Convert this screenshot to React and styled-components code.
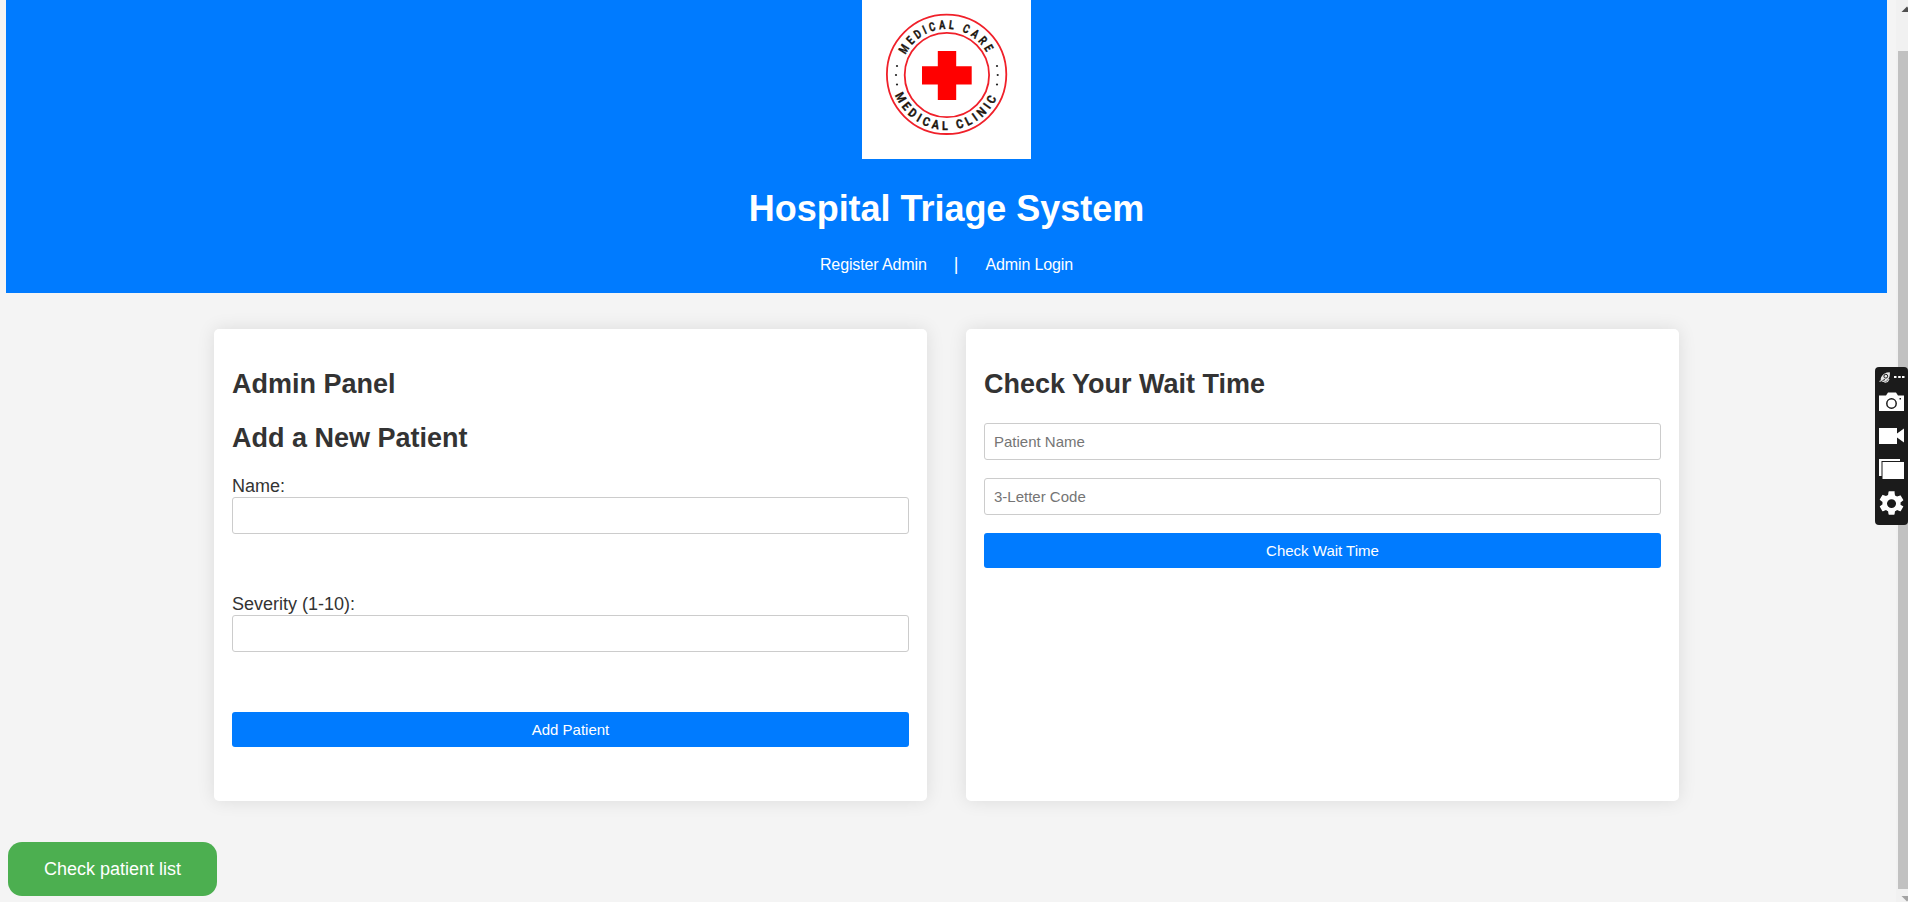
import React from "react";
import styled, { createGlobalStyle } from "styled-components";

const GlobalStyle = createGlobalStyle`
  *, *::before, *::after { box-sizing: border-box; }
  body {
    margin: 0;
    background: #f4f4f4;
    color: #333;
    font: 18px/21px "Liberation Sans", Arial, sans-serif;
    overflow: hidden;
  }
`;

const Shell = styled.div`
  display: flex;
  height: 902px;
  overflow: hidden;
`;

const Page = styled.div`
  flex: 1;
  min-width: 0;
  display: flex;
  flex-direction: column;
  align-items: flex-start;
  padding: 0 9px 0 6px;
`;

const Header = styled.header`
  align-self: stretch;
  height: 293px;
  display: flex;
  flex-direction: column;
  align-items: center;
  background: #007bff;
  color: #fff;
`;

const LogoFrame = styled.div`
  width: 169px;
  height: 159px;
  background: #fff;
  svg { display: block; }
`;

const Title = styled.h1`
  margin: 29px 0 0;
  font-size: 36px;
  line-height: 41px;
  letter-spacing: -0.03px;
`;

const Nav = styled.nav`
  display: flex;
  align-items: baseline;
  gap: 27px;
  margin-top: 25px;
  font-size: 18px;
  line-height: 20px;
`;

const NavLink = styled.a`
  color: #fff;
  font-size: 16px;
  letter-spacing: -0.12px;
  text-decoration: none;
`;

const Panels = styled.main`
  align-self: center;
  display: grid;
  grid-template-columns: 713px 713px;
  gap: 39px;
  margin-top: 36px;
`;

const Panel = styled.section`
  height: 472px;
  padding: 40px 18px 18px;
  border-radius: 5px;
  background: #fff;
  box-shadow: 0 0 18px rgba(0, 0, 0, 0.1);
`;

const Heading = styled.h2`
  margin: 0 0 ${(p) => p.$gap || 23}px;
  font-size: 27px;
  line-height: 31px;
`;

const Label = styled.label`
  display: block;
`;

const Input = styled.input`
  display: block;
  width: 100%;
  height: 37px;
  margin: 0 0 ${(p) => p.$gap}px;
  padding: 0 9px;
  border: 1px solid #ccc;
  border-radius: 3px;
  background: #fff;
  font: 15px "Liberation Sans", Arial, sans-serif;
  &::placeholder { color: #757575; }
`;

const Button = styled.button`
  display: block;
  width: 100%;
  height: 35px;
  padding: 0;
  border: 0;
  border-radius: 3px;
  background: #007bff;
  color: #fff;
  font: 15px "Liberation Sans", Arial, sans-serif;
`;

const ListButton = styled.button`
  width: 209px;
  height: 54px;
  margin: 41px 0 0 2px;
  padding: 0;
  border: 0;
  border-radius: 14px;
  background: #4caf50;
  color: #fff;
  font: 18px "Liberation Sans", Arial, sans-serif;
`;

const Scrollbar = styled.div`
  width: 12px;
  display: flex;
  flex-direction: column;
  background: #f1f1f1;
`;

const ScrollThumb = styled.div`
  flex: 1;
  margin-left: 2px;
  background: #c1c1c1;
`;

const ScrollArrow = styled.svg`
  display: block;
  width: 12px;
  height: ${(p) => p.$height}px;
`;

const CaptureBar = styled.aside`
  position: fixed;
  top: 367px;
  right: 0;
  width: 33px;
  height: 158px;
  border-radius: 4px;
  background: #1b1b1b;
  overflow: hidden;
  svg { display: block; }
`;

function Logo() {
  return (
    <svg width="169" height="159" viewBox="0 0 169 159">
      <defs>
        <path id="arcTop" d="M43.7 54.8 A45.3 45.3 0 0 1 125.5 54.8" />
        <path id="arcBottom" d="M33.1 95.1 A55.5 55.5 0 0 0 136.1 95.1" />
      </defs>
      <g fill="none" stroke="#f0202a" strokeWidth="1.8">
        <circle cx="84.6" cy="74.3" r="59.7" />
        <circle cx="84.9" cy="75" r="42.2" />
      </g>
      <path fill="#f00" d="M75.8 51h18.4v15.2h15.5v18.2H94.2V100H75.8V84.4H60V66.2h15.8z" />
      <g
        fill="#20160f"
        stroke="#20160f"
        strokeWidth="0.35"
        fontFamily='"Liberation Sans Narrow", Roboto, sans-serif'
        fontWeight="700"
        fontSize="12.2"
        letterSpacing="4"
      >
        <text>
          <textPath href="#arcTop" textLength="102" lengthAdjust="spacingAndGlyphs">MEDICAL CARE</textPath>
        </text>
        <text>
          <textPath href="#arcBottom" textLength="132" lengthAdjust="spacingAndGlyphs">MEDICAL CLINIC</textPath>
        </text>
      </g>
      <g fill="#222">
        {[66, 75, 84.5].map((y, i) => (
          <React.Fragment key={y}>
            <circle cx={i === 1 ? 34 : 35} cy={y} r="1.1" />
            <circle cx={i === 1 ? 135.7 : 135} cy={y} r="1.1" />
          </React.Fragment>
        ))}
      </g>
    </svg>
  );
}

function CaptureIcons() {
  return (
    <svg width="33" height="158" viewBox="0 0 33 158" fill="#fff">
      <path fill="#e6e6e6" d="M14.800 5.300c.5 4-1 7.500-4.300 9.200-1.500.8-3 .6-4-.4s-1-2.600-.2-4C7.900 7.200 11 5.200 14.800 5.300z" />
      <path d="M4.500 14.500l2-1M9.500 15.500l3-1 1.500-2.500" stroke="#ddd" strokeWidth="1.200" fill="none" />
      <circle cx="10.800" cy="9.200" r="1.900" fill="none" stroke="#1b1b1b" strokeWidth="1" />
      <path d="M7.500 13.500l2.500-1" stroke="#1b1b1b" strokeWidth="1" />
      <rect x="19" y="9" width="2.500" height="2" />
      <rect x="23.200" y="9" width="2.500" height="2" />
      <rect x="27" y="9" width="2.500" height="2" />
      <path d="M4 28.500h7l2-3h8l2 3h6V44H4z" />
      <circle cx="16.500" cy="36.500" r="4.700" fill="none" stroke="#1b1b1b" strokeWidth="1.500" />
      <rect x="24.500" y="31" width="1.500" height="1.500" fill="#1b1b1b" />
      <path d="M4 61h18v5.500l7-5v14l-7-5V77H4z" />
      <path d="M4 92h21v2H6.500v15H4z" />
      <rect x="7.500" y="95" width="21.500" height="17" />
      <path
        transform="translate(1.400 121.900) scale(1.260 1.220)"
        d="M19.140 12.940c.04-.3.060-.610.060-.940s-.02-.640-.070-.940l2.030-1.580a.49.49 0 0 0 .120-.610l-1.920-3.320a.49.49 0 0 0-.590-.220l-2.390.960c-.5-.380-1.030-.7-1.620-.940l-.360-2.540A.48.48 0 0 0 13.920 2h-3.840c-.24 0-.430.170-.470.410l-.360 2.540c-.590.240-1.130.570-1.620.940l-2.390-.960a.48.48 0 0 0-.590.220L2.740 8.470a.48.48 0 0 0 .120.610l2.030 1.580c-.05.300-.09.630-.09.940s.02.640.070.940l-2.010 1.580a.49.49 0 0 0-.120.610l1.920 3.320c.120.220.370.290.590.220l2.390-.960c.500.380 1.030.700 1.620.940l.360 2.540c.05.240.24.410.480.410h3.840c.24 0 .440-.170.470-.410l.360-2.540c.590-.24 1.130-.560 1.620-.940l2.390.960c.220.080.470 0 .590-.220l1.920-3.320a.48.48 0 0 0-.120-.610zM12 15.600A3.600 3.600 0 1 1 12 8.400a3.600 3.600 0 0 1 0 7.200z"
      />
    </svg>
  );
}

export default function App() {
  return (
    <>
      <GlobalStyle />
      <Shell>
        <Page>
          <Header>
            <LogoFrame><Logo /></LogoFrame>
            <Title>Hospital Triage System</Title>
            <Nav>
              <NavLink>Register Admin</NavLink>
              <span>|</span>
              <NavLink>Admin Login</NavLink>
            </Nav>
          </Header>
          <Panels>
            <Panel>
              <Heading>Admin Panel</Heading>
              <Heading $gap={22}>Add a New Patient</Heading>
              <Label htmlFor="name">Name:</Label>
              <Input id="name" $gap={60} />
              <Label htmlFor="severity">Severity (1-10):</Label>
              <Input id="severity" $gap={60} />
              <Button>Add Patient</Button>
            </Panel>
            <Panel>
              <Heading>Check Your Wait Time</Heading>
              <Input placeholder="Patient Name" $gap={18} />
              <Input placeholder="3-Letter Code" $gap={18} />
              <Button>Check Wait Time</Button>
            </Panel>
          </Panels>
          <ListButton>Check patient list</ListButton>
        </Page>
        <Scrollbar>
          <ScrollArrow $height={51} viewBox="0 0 12 51">
            <path d="M5.500 12L11 6.500l5.500 5.500z" fill="#505050" />
          </ScrollArrow>
          <ScrollThumb />
          <ScrollArrow $height={13} viewBox="0 0 12 13">
            <path d="M5.500 7h11L11 12.500z" fill="#a3a3a3" />
          </ScrollArrow>
        </Scrollbar>
      </Shell>
      <CaptureBar><CaptureIcons /></CaptureBar>
    </>
  );
}
